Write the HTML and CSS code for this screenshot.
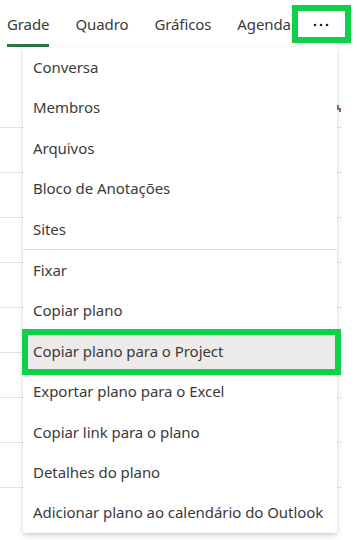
FILE: index.html
```html
<!DOCTYPE html>
<html lang="pt">
<head>
<meta charset="utf-8">
<link rel="stylesheet" href="styles.css">
</head>
<body>
<div class="page">
  <nav class="tabs">
    <span class="tab active">Grade</span>
    <span class="tab">Quadro</span>
    <span class="tab">Gráficos</span>
    <span class="tab">Agenda</span>
  </nav>
  <button class="more" aria-label="Mais">
    <svg width="16" height="4" viewBox="0 0 16 4"><circle cx="2" cy="2" r="1.3" fill="#252423"/><circle cx="8" cy="2" r="1.3" fill="#252423"/><circle cx="14" cy="2" r="1.3" fill="#252423"/></svg>
  </button>
  <div class="grid">
    <div class="row"></div>
    <div class="row"></div>
    <div class="row"></div>
    <div class="row"></div>
    <div class="row"></div>
    <div class="row"></div>
    <div class="row"></div>
    <div class="row"></div>
    <div class="row"></div>
  </div>
  <span class="peek"><i class="b"></i><i class="r"></i></span>
  <ul class="menu">
    <li class="item">Conversa</li>
    <li class="item">Membros</li>
    <li class="item">Arquivos</li>
    <li class="item">Bloco de Anotações</li>
    <li class="item">Sites</li>
    <li class="sep"></li>
    <li class="item">Fixar</li>
    <li class="item">Copiar plano</li>
    <li class="item hover">Copiar plano para o Project<span class="mark"></span></li>
    <li class="item">Exportar plano para o Excel</li>
    <li class="item">Copiar link para o plano</li>
    <li class="item">Detalhes do plano</li>
    <li class="item">Adicionar plano ao calendário do Outlook</li>
  </ul>
</div>
</body>
</html>
```
FILE: styles.css
```css
html, body {
  margin: 0;
  padding: 0;
  background: #ffffff;
}
body {
  font-family: "Noto Sans", "Open Sans", sans-serif;
  color: #3b3a39;
  width: 357px;
  height: 540px;
  overflow: hidden;
}
.page {
  position: relative;
  width: 357px;
  height: 540px;
}
.tabs {
  display: flex;
  gap: 26px;
  padding-left: 7px;
  height: 47px;
}
.tab {
  font-size: 15px;
  line-height: 20px;
  padding-top: 14px;
  padding-bottom: 9px;
  border-bottom: 3px solid transparent;
  white-space: nowrap;
  letter-spacing: -0.1px;
}
.tab.active {
  border-bottom-color: #2e7547;
}
.more {
  position: absolute;
  left: 292px;
  top: 5px;
  width: 59px;
  height: 38px;
  box-sizing: border-box;
  border: 6px solid #10cf48;
  background: #ffffff;
  padding: 0;
  margin: 0;
  display: flex;
  align-items: center;
  justify-content: center;
}
.more svg {
  display: block;
  margin-left: -1px;
  margin-top: 2px;
}
.grid {
  width: 341px;
  margin-top: 36px;
}
.row {
  height: 44px;
  border-bottom: 1px solid #e6e4e2;
}
.peek {
  position: absolute;
  left: 337px;
  top: 105px;
  display: flex;
}
.peek i {
  display: block;
  width: 2px;
}
.peek .b { height: 5px; background: #5a7fc8; }
.peek .r { height: 4px; margin-top: 3px; background: #c0553a; }
.menu {
  position: absolute;
  left: 23px;
  top: 47px;
  width: 314px;
  height: 486px;
  margin: 0;
  padding: 0;
  box-sizing: border-box;
  list-style: none;
  background: #ffffff;
  box-shadow: 0 3.2px 7.2px rgba(0,0,0,0.13), 0 0.6px 1.8px rgba(0,0,0,0.11);
}
.item {
  position: relative;
  height: 40.4px;
  line-height: 40.4px;
  padding-left: 10px;
  font-size: 15px;
  letter-spacing: -0.05px;
  white-space: nowrap;
}
.item.hover {
  background: #edebe9;
}
.sep {
  height: 1px;
  background: #e1dfdd;
}
.mark {
  position: absolute;
  left: -1px;
  right: -4px;
  top: -2px;
  bottom: -4px;
  border: 6px solid #10cf48;
}
```
